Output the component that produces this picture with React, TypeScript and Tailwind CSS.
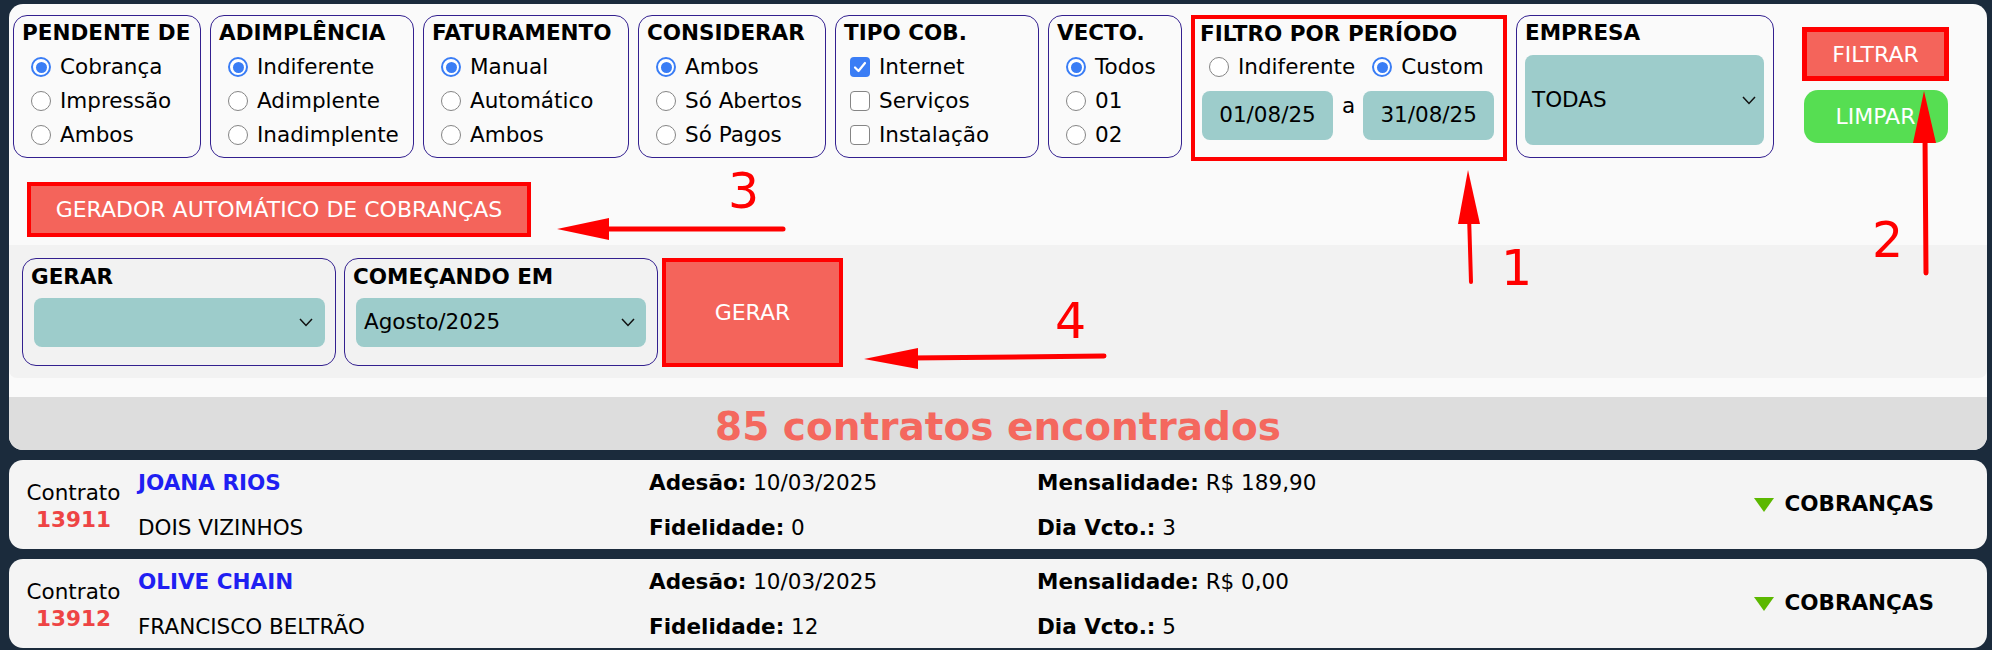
import React from "react";

const SALMON = "bg-[#f4645b]";

function Radio({ on }: { on?: boolean }) {
  if (on) {
    return (
      <span className="flex h-[20px] w-[20px] shrink-0 items-center justify-center rounded-full border-[2px] border-[#3a7df5] bg-white">
        <span className="h-[11px] w-[11px] rounded-full bg-[#3a7df5]" />
      </span>
    );
  }
  return <span className="h-[20px] w-[20px] shrink-0 rounded-full border-[1.5px] border-[#858585] bg-white" />;
}

function Check({ on }: { on?: boolean }) {
  if (on) {
    return (
      <span className="flex h-[20px] w-[20px] shrink-0 items-center justify-center rounded-[4px] bg-[#3a7df5]">
        <svg width="14" height="12" viewBox="0 0 14 12">
          <path d="M2 6.5 L5.5 10 L12 2" fill="none" stroke="#fff" strokeWidth="2.2" strokeLinecap="round" strokeLinejoin="round" />
        </svg>
      </span>
    );
  }
  return <span className="h-[20px] w-[20px] shrink-0 rounded-[4px] border-[1.5px] border-[#858585] bg-white" />;
}

function Chevron() {
  return (
    <svg width="14" height="9" viewBox="0 0 14 9" className="shrink-0">
      <path d="M1 1 L7 7.5 L13 1" fill="none" stroke="#111" strokeWidth="1.5" />
    </svg>
  );
}

function Opt({ on, label }: { on?: boolean; label: string }) {
  return (
    <div className="ml-[9px] flex h-[34px] items-center gap-[9px]">
      <Radio on={on} />
      <span>{label}</span>
    </div>
  );
}

function ChkOpt({ on, label }: { on?: boolean; label: string }) {
  return (
    <div className="ml-[6px] flex h-[34px] items-center gap-[9px]">
      <Check on={on} />
      <span>{label}</span>
    </div>
  );
}

function Box({ width, title, children }: { width: string; title: string; children: React.ReactNode }) {
  return (
    <div className={`h-[143px] shrink-0 rounded-[14px] border border-[#33208f] pl-[8px] leading-[34px] ${width}`}>
      <div className="font-bold">{title}</div>
      {children}
    </div>
  );
}

function Contract({ num, name, city, adesao, fid, mens, dia }: { num: string; name: string; city: string; adesao: string; fid: string; mens: string; dia: string }) {
  return (
    <div className="flex h-[89px] items-center rounded-[14px] bg-[#f4f4f4] pl-[14px] pr-[53px]">
      <div className="mt-[3px] w-[101px] shrink-0 text-center leading-[27px]">
        <div>Contrato</div>
        <div className="font-bold text-[#ee4444]">{num}</div>
      </div>
      <div className="ml-[14px] w-[511px] shrink-0 leading-[45px]">
        <div className="font-bold text-[#1f1ff2]">{name}</div>
        <div>{city}</div>
      </div>
      <div className="w-[388px] shrink-0 leading-[45px]">
        <div><b>Adesão:</b> {adesao}</div>
        <div><b>Fidelidade:</b> {fid}</div>
      </div>
      <div className="flex-1 leading-[45px]">
        <div><b>Mensalidade:</b> {mens}</div>
        <div><b>Dia Vcto.:</b> {dia}</div>
      </div>
      <div className="flex items-center gap-[10px] font-bold">
        <svg width="20" height="14" viewBox="0 0 20 14">
          <polygon points="0,0 20,0 10,14" fill="#5cb800" />
        </svg>
        <span>COBRANÇAS</span>
      </div>
    </div>
  );
}

export default function App() {
  return (
    <div className="relative h-[650px] w-full overflow-hidden bg-[#1b2b3c] pl-[9px] pr-[5px] pt-[4px] font-['DejaVu_Sans',sans-serif] text-[21.5px] text-black">
      <div className="overflow-hidden rounded-[14px] bg-[#fafafa]">
        {/* filtros */}
        <div className="flex items-start gap-[9px] pl-[4px] pt-[11px]">
          <Box width="w-[188px]" title="PENDENTE DE">
            <Opt on label="Cobrança" />
            <Opt label="Impressão" />
            <Opt label="Ambos" />
          </Box>
          <Box width="w-[204px]" title="ADIMPLÊNCIA">
            <Opt on label="Indiferente" />
            <Opt label="Adimplente" />
            <Opt label="Inadimplente" />
          </Box>
          <Box width="w-[206px]" title="FATURAMENTO">
            <Opt on label="Manual" />
            <Opt label="Automático" />
            <Opt label="Ambos" />
          </Box>
          <Box width="w-[188px]" title="CONSIDERAR">
            <Opt on label="Ambos" />
            <Opt label="Só Abertos" />
            <Opt label="Só Pagos" />
          </Box>
          <Box width="w-[204px]" title="TIPO COB.">
            <ChkOpt on label="Internet" />
            <ChkOpt label="Serviços" />
            <ChkOpt label="Instalação" />
          </Box>
          <Box width="w-[134px]" title="VECTO.">
            <Opt on label="Todos" />
            <Opt label="01" />
            <Opt label="02" />
          </Box>
          <div className="h-[146px] w-[316px] shrink-0 border-[4px] border-[#f00] pl-[5px]">
            <div className="h-[30px] font-bold leading-[30px]">FILTRO POR PERÍODO</div>
            <div className="flex h-[36px] items-center">
              <span className="ml-[9px] flex items-center gap-[9px]">
                <Radio />
                <span>Indiferente</span>
              </span>
              <span className="ml-[17px] flex items-center gap-[9px]">
                <Radio on />
                <span>Custom</span>
              </span>
            </div>
            <div className="ml-[2px] mt-[6px] flex items-start">
              <div className="flex h-[49px] w-[131px] items-center justify-center rounded-[8px] bg-[#9dcccb]">01/08/25</div>
              <span className="-mt-[2.5px] ml-[9px] mr-[8px] leading-[34px]">a</span>
              <div className="flex h-[49px] w-[131px] items-center justify-center rounded-[8px] bg-[#9dcccb]">31/08/25</div>
            </div>
          </div>
          <div className="h-[143px] w-[258px] shrink-0 rounded-[14px] border border-[#33208f] pl-[8px]">
            <div className="font-bold leading-[34px]">EMPRESA</div>
            <div className="mt-[5px] flex h-[90px] w-[239px] items-center justify-between rounded-[8px] bg-[#9dcccb] pl-[7px] pr-[8px]">
              <span>TODAS</span>
              <Chevron />
            </div>
          </div>
          <div className="ml-[19px] flex w-[147px] shrink-0 flex-col items-center pt-[12px] text-[22px] text-white">
            <button className={`flex h-[54px] w-[147px] items-center justify-center border-[5px] border-[#f00] ${SALMON}`}>FILTRAR</button>
            <button className="mt-[9px] flex h-[53px] w-[144px] items-center justify-center rounded-[14px] bg-[#56de52]">LIMPAR</button>
          </div>
        </div>

        {/* gerador */}
        <div className="mt-[21px] pl-[18px]">
          <button className={`flex h-[55px] w-[504px] items-center justify-center border-[4px] border-[#f00] text-[22px] text-white ${SALMON}`}>
            GERADOR AUTOMÁTICO DE COBRANÇAS
          </button>
        </div>

        <div className="mt-[8px] flex h-[133px] items-start gap-[8px] rounded-b-[8px] bg-[#f2f2f2] pl-[13px] pt-[13px]">
          <div className="h-[108px] w-[314px] shrink-0 rounded-[14px] border border-[#33208f] pl-[8px] pt-[1px]">
            <div className="font-bold leading-[34px]">GERAR</div>
            <div className="ml-[3px] mt-[4px] flex h-[49px] w-[291px] items-center justify-end rounded-[8px] bg-[#9dcccb] pr-[12px]">
              <Chevron />
            </div>
          </div>
          <div className="h-[108px] w-[314px] shrink-0 rounded-[14px] border border-[#33208f] pl-[8px] pt-[1px]">
            <div className="font-bold leading-[34px]">COMEÇANDO EM</div>
            <div className="ml-[3px] mt-[4px] flex h-[49px] w-[290px] items-center justify-between rounded-[8px] bg-[#9dcccb] pl-[8px] pr-[11px]">
              <span>Agosto/2025</span>
              <Chevron />
            </div>
          </div>
          <button className={`-ml-[4px] flex h-[109px] w-[181px] shrink-0 items-center justify-center border-[4px] border-[#f00] text-[22px] text-white ${SALMON}`}>
            GERAR
          </button>
        </div>

        <div className="mt-[19px] flex h-[53px] items-center justify-center bg-[#dddddd] pt-[5px] text-[39px] font-bold leading-none text-[#f4685e]">
          85 contratos encontrados
        </div>
      </div>

      <div className="mt-[10px] flex flex-col gap-[10px]">
        <Contract num="13911" name="JOANA RIOS" city="DOIS VIZINHOS" adesao="10/03/2025" fid="0" mens="R$ 189,90" dia="3" />
        <Contract num="13912" name="OLIVE CHAIN" city="FRANCISCO BELTRÃO" adesao="10/03/2025" fid="12" mens="R$ 0,00" dia="5" />
      </div>

      {/* anotações */}
      <svg className="pointer-events-none absolute left-0 top-0" width="1992" height="650" viewBox="0 0 1992 650">
        <g stroke="#f00" strokeLinecap="round" fill="none">
          <line x1="1471" y1="282" x2="1469" y2="215" strokeWidth="4" />
          <line x1="1926" y1="273" x2="1925" y2="135" strokeWidth="5" />
          <line x1="783" y1="229" x2="600" y2="229" strokeWidth="5" />
          <line x1="1104" y1="356" x2="910" y2="358" strokeWidth="5" />
        </g>
        <g fill="#f00">
          <polygon points="1468,170 1458,224 1480,224" />
          <polygon points="1924,91 1913,143 1936,143" />
          <polygon points="557,229 609,218 609,240" />
          <polygon points="864,359 918,348 918,369" />
        </g>
      </svg>
      <span className="pointer-events-none absolute left-[1501px] top-[244px] text-[49px] leading-[49px] text-[#f00]">1</span>
      <span className="pointer-events-none absolute left-[1872px] top-[216px] text-[49px] leading-[49px] text-[#f00]">2</span>
      <span className="pointer-events-none absolute left-[728px] top-[167px] text-[49px] leading-[49px] text-[#f00]">3</span>
      <span className="pointer-events-none absolute left-[1055px] top-[297px] text-[49px] leading-[49px] text-[#f00]">4</span>
    </div>
  );
}
